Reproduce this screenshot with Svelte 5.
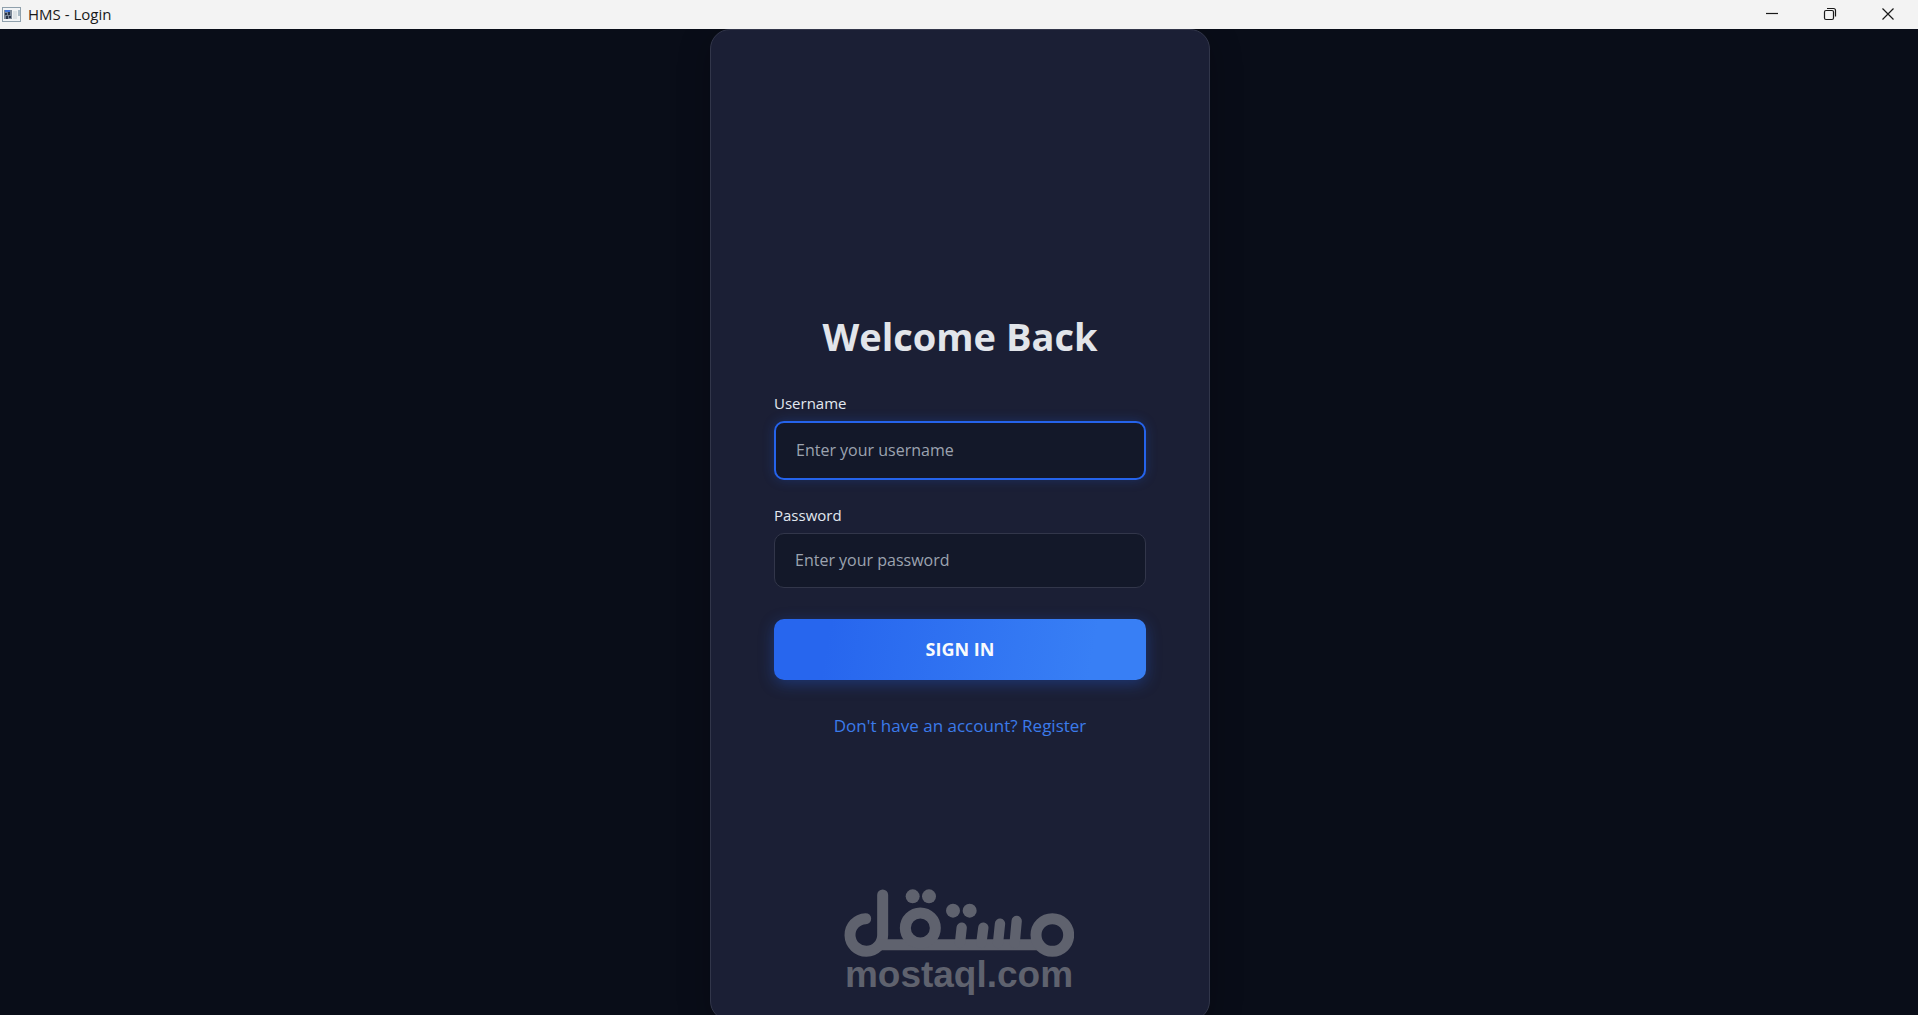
<script lang="ts">
  let username = $state("");
  let password = $state("");
  let activeField = $state("username");

  function signIn(event: SubmitEvent) {
    event.preventDefault();
  }
</script>

<div class="window">
  <header class="titlebar">
    <svg class="app-icon" viewBox="0 0 20 16" aria-hidden="true">
      <rect x="0.5" y="0.5" width="18" height="14" fill="#f1f3f5" stroke="#8fa0ac" />
      <rect x="2" y="3" width="8" height="9" fill="#7b8797" />
      <rect x="3" y="3" width="5" height="2" fill="#3f74d8" />
      <path d="M3 6h2v2h-2zM6 5h2v3h-2zM4 9h2v3h-2zM7 9h2v2h-2z" fill="#28344a" />
      <rect x="11" y="4" width="4" height="8" fill="#dde2e6" />
      <rect x="16" y="3" width="2" height="6" fill="#a9bac6" />
    </svg>
    <span class="caption">HMS - Login</span>
    <div class="controls">
      <button type="button" aria-label="Minimize">
        <svg viewBox="0 0 14 14"><path d="M1 6.5h12" /></svg>
      </button>
      <button type="button" aria-label="Restore">
        <svg viewBox="0 0 14 14">
          <rect x="1.5" y="3.5" width="9" height="9" rx="1.5" />
          <path d="M4 1.5h6.5a2 2 0 0 1 2 2v6" />
        </svg>
      </button>
      <button type="button" aria-label="Close">
        <svg viewBox="0 0 14 14"><path d="M1.5 1.5l11 11M12.5 1.5l-11 11" /></svg>
      </button>
    </div>
  </header>

  <main>
    <section class="card">
      <h1>Welcome Back</h1>
      <form onsubmit={signIn}>
        <div class="field">
          <label for="username">Username</label>
          <input
            id="username"
            type="text"
            placeholder="Enter your username"
            class:active={activeField === "username"}
            bind:value={username}
            onfocus={() => (activeField = "username")}
          />
        </div>
        <div class="field">
          <label for="password">Password</label>
          <input
            id="password"
            type="password"
            placeholder="Enter your password"
            class:active={activeField === "password"}
            bind:value={password}
            onfocus={() => (activeField = "password")}
          />
        </div>
        <button class="submit" type="submit">SIGN IN</button>
      </form>
      <a class="register" href="#register">Don't have an account? Register</a>
    </section>
  </main>

  <div class="watermark">
    <svg viewBox="72 56 690 204" role="img" aria-label="مستقل">
      <g fill="none" stroke="currentColor" stroke-width="33" stroke-linecap="round">
        <path d="M137 145A49 49 0 1 0 188 194V74" />
        <path d="M170 223.500H660" stroke-linecap="butt" />
        <circle cx="301" cy="173" r="45" />
        <circle cx="697" cy="194" r="49" />
        <path d="M425 172l-5 46M490 172l-6 46M540 160l-6 58M590 152l-6 66" stroke-width="31" />
      </g>
      <g fill="currentColor">
        <circle cx="278" cy="78" r="21" />
        <circle cx="327" cy="78" r="21" />
        <circle cx="399" cy="121" r="21" />
        <circle cx="449" cy="121" r="21" />
      </g>
    </svg>
    <span>mostaql.com</span>
  </div>
</div>

<style>
  :global(body) {
    background: #090d18;
    overflow: hidden;
  }

  .window {
    display: flex;
    flex-direction: column;
    height: 100vh;
    font-family: "Segoe UI", "Open Sans", "Noto Sans", sans-serif;
    color: #e2e8f0;
  }

  /* Title bar */
  .titlebar {
    position: relative;
    z-index: 1;
    display: flex;
    align-items: center;
    flex: none;
    height: 29px;
    padding-left: 2px;
    background: #f3f3f3;
    color: #191919;
  }

  .app-icon {
    width: 20px;
    height: 16px;
  }

  .caption {
    margin-left: 6px;
    font-size: 15px;
    line-height: 20px;
    padding-bottom: 2px;
  }

  .controls {
    display: flex;
    margin-left: auto;
    padding-right: 1px;
    height: 100%;
  }

  .controls button {
    display: flex;
    align-items: center;
    justify-content: center;
    width: 58px;
    padding: 0 0 1px;
    border: 0;
    background: none;
  }

  .controls svg {
    width: 14px;
    height: 14px;
    fill: none;
    stroke: #191919;
    stroke-width: 1.2;
  }

  /* Login card */
  main {
    flex: 1;
    min-height: 0;
    display: flex;
    justify-content: center;
    padding-left: 2px;
    background: #090d18;
  }

  .card {
    box-sizing: border-box;
    display: flex;
    flex-direction: column;
    justify-content: center;
    width: 100%;
    max-width: 500px;
    height: calc(100% + 6px);
    padding: 0 63px 5px;
    border: 1px solid #32364a;
    border-radius: 20px;
    background: #1b1f35;
    box-shadow: 0 8px 32px rgba(0, 0, 0, 0.25);
  }

  h1 {
    margin: 0 0 27px;
    color: #e2e5ea;
    font-size: 38px;
    line-height: 56px;
    font-weight: 700;
    text-align: center;
  }

  .field {
    display: flex;
    flex-direction: column;
    gap: 6px;
    margin-bottom: 23px;
  }

  label {
    font-size: 15px;
    line-height: 24px;
  }

  input {
    box-sizing: border-box;
    width: 100%;
    padding: 15px 20px;
    border: 1px solid #32364a;
    border-radius: 10px;
    outline: none;
    background: #131829;
    color: #e2e8f0;
    font-family: inherit;
    font-size: 16px;
    line-height: 23px;
  }

  input::placeholder {
    color: #9ca3b0;
    opacity: 1;
  }

  input.active {
    padding: 16px 20px;
    border: 2px solid #2563eb;
    box-shadow: 0 0 12px rgba(37, 99, 235, 0.25);
  }

  .submit {
    width: 100%;
    margin-top: 8px;
    padding: 18px;
    border: 0;
    border-radius: 10px;
    background: linear-gradient(100deg, #2766ee 15%, #387ff5 85%);
    box-shadow: 0 4px 15px rgba(37, 99, 235, 0.35);
    color: #f8fafc;
    font-family: inherit;
    font-size: 18px;
    line-height: 25px;
    font-weight: 700;
  }

  .register {
    margin-top: 34px;
    color: #3b7bea;
    font-size: 17px;
    line-height: 24px;
    text-align: center;
    text-decoration: none;
  }

  /* Watermark over the card */
  .watermark {
    position: absolute;
    bottom: 23px;
    left: 50%;
    transform: translateX(-50%);
    display: flex;
    flex-direction: column;
    align-items: center;
    color: #5f626e;
    pointer-events: none;
  }

  .watermark svg {
    width: 230px;
    height: 68px;
  }

  .watermark span {
    font-family: "Liberation Sans", Arial, sans-serif;
    font-size: 37px;
    line-height: 35px;
    font-weight: 700;
  }
</style>
